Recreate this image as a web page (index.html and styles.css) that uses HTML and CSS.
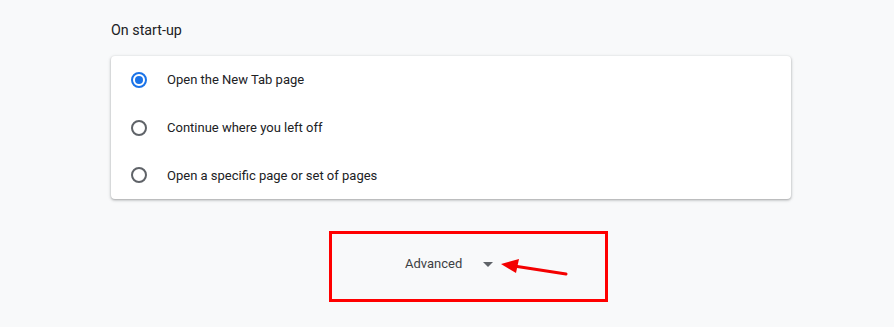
FILE: index.html
```html
<!DOCTYPE html>
<html>
<head>
<meta charset="utf-8">
<link rel="stylesheet" href="styles.css">
</head>
<body>
<div class="page">
  <h2 class="section-title">On start-up</h2>
  <div class="card">
    <label class="row">
      <span class="radio checked"><span class="dot"></span></span>
      <span class="label">Open the New Tab page</span>
    </label>
    <label class="row">
      <span class="radio"></span>
      <span class="label">Continue where you left off</span>
    </label>
    <label class="row">
      <span class="radio"></span>
      <span class="label">Open a specific page or set of pages</span>
    </label>
  </div>
  <div class="highlight">
    <div class="advanced">
      <span class="adv-text">Advanced</span>
      <svg class="drop" width="24" height="24" viewBox="0 0 24 24"><path d="M7 10l5 5 5-5z" fill="#5f6368"/></svg>
    </div>
    <svg class="pointer" width="80" height="24" viewBox="0 0 80 24">
      <line x1="14" y1="7" x2="66" y2="15" stroke="#f40000" stroke-width="3" stroke-linecap="round"/>
      <polygon points="1,5 19,0 16,14" fill="#f40000"/>
    </svg>
  </div>
</div>
</body>
</html>
```
FILE: styles.css
```css
html, body {
  margin: 0;
  padding: 0;
  background: #f8f9fa;
  font-family: Roboto, "Liberation Sans", sans-serif;
  color: #202124;
}
.page {
  padding-left: 111px;
  padding-top: 20px;
  width: 680px;
}
.section-title {
  margin: 0 0 16px 0;
  font-size: 14.3px;
  font-weight: 400;
  line-height: 20px;
  color: #202124;
}
.card {
  background: #fff;
  border-radius: 4px;
  box-shadow: 0 1px 2px rgba(60,64,67,.3), 0 1px 3px 1px rgba(60,64,67,.15);
  display: flex;
  flex-direction: column;
  height: 143px;
}
.row {
  display: flex;
  align-items: center;
  height: 48px;
  padding-left: 20px;
}
.radio {
  box-sizing: border-box;
  width: 16px;
  height: 16px;
  border: 2px solid #5f6368;
  border-radius: 50%;
  display: flex;
  align-items: center;
  justify-content: center;
  margin-right: 20px;
  flex: none;
}
.radio.checked {
  border-color: #1a73e8;
}
.dot {
  width: 8px;
  height: 8px;
  border-radius: 50%;
  background: #1a73e8;
}
.label {
  font-size: 13px;
  color: #202124;
}
.highlight {
  position: relative;
  margin: 32px 0 0 218px;
  width: 273px;
  height: 65px;
  border: 3px solid #ff0000;
  display: flex;
  align-items: center;
  box-sizing: content-box;
}
.advanced {
  display: flex;
  align-items: center;
  margin-left: 73px;
  margin-top: -6px;
}
.adv-text {
  font-size: 13px;
  color: #3c4043;
}
.drop {
  margin-left: 14px;
}
.pointer {
  position: absolute;
  left: 168px;
  top: 25px;
}
```
